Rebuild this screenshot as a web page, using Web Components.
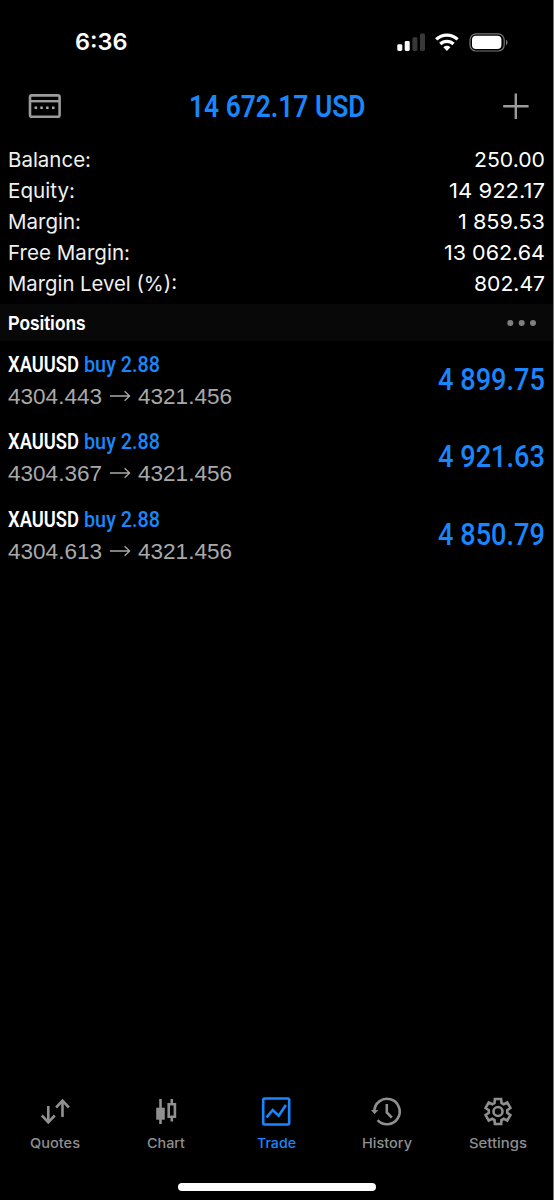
<!DOCTYPE html>
<html lang="en">
<head>
<meta charset="utf-8">
<title>Trade</title>
<style>
html,body{margin:0;background:#000;height:100%;overflow:hidden}
</style>
</head>
<body>
<trade-app></trade-app>
<script>
const define = (name, html, setup) => {
  const tpl = document.createElement('template');
  tpl.innerHTML = html;
  customElements.define(name, class extends HTMLElement {
    connectedCallback() {
      if (this.shadowRoot) return;
      this.attachShadow({ mode: 'open' }).append(tpl.content.cloneNode(true));
      if (setup) setup(this, this.shadowRoot);
    }
  });
};

// One line of text, condensed or widened to the width in its "w" attribute.
define('fit-text', `<style>
:host{display:block;flex:none;white-space:nowrap;height:var(--lh,30px)}
span{display:block;width:max-content;line-height:var(--lh,30px);transform-origin:0 50%;white-space:pre}
</style><span></span>`, (el, root) => {
  const s = root.querySelector('span');
  s.textContent = el.getAttribute('text');
  const w = +el.getAttribute('w');
  el.style.width = w + 'px';
  s.style.transform = 'scaleX(' + w / s.getBoundingClientRect().width + ')';
});

define('status-bar', `<style>
:host{display:flex;height:83px;box-sizing:border-box;padding:0 45px 0 74.5px;align-items:center;justify-content:space-between;color:#fff}
fit-text{font:600 23px Inter,sans-serif}
svg{display:block}
</style>
<fit-text text="6:36" w="52.5"></fit-text>
<svg width="112" height="22" viewBox="396 30 112 22">
<g fill="#fff"><rect x="397.3" y="43.2" width="5" height="6.8" rx="1.4"/><rect x="404.7" y="40" width="5" height="10" rx="1.4"/></g>
<g fill="#383838"><rect x="412.4" y="36.3" width="5" height="13.7" rx="1.4"/><rect x="420" y="32.6" width="5" height="17.4" rx="1.4"/></g>
<g fill="none" stroke="#fff" stroke-width="3.2"><path d="M436.2 38.4a15.3 15.3 0 0 1 21.4 0"/><path d="M440.3 43a9.4 9.4 0 0 1 13.2 0"/></g>
<path d="M443.4 46.3a5 5 0 0 1 7 0l-3.5 3.7z" fill="#fff"/>
<rect x="470" y="32.8" width="34.2" height="17.2" rx="6" fill="none" stroke="#777" stroke-width="1.2"/>
<rect x="472" y="34.8" width="29.4" height="13.2" rx="4" fill="#fff"/>
<path d="M506 38.8c2 .8 2 4.6 0 5.4z" fill="#777"/>
</svg>`);

define('account-header', `<style>
:host{display:flex;height:61px;box-sizing:border-box;padding:0 23px 15px 28px;align-items:center}
fit-text{font:600 30.5px Roboto,sans-serif;color:#1a86fb;margin:2px auto 0 127px}
svg{display:block}
</style>
<svg width="34" height="26" viewBox="28 93 34 26"><rect x="30" y="95.4" width="29.6" height="21.4" rx="1.8" fill="none" stroke="#9b9b9b" stroke-width="2.6"/><path d="M30 101.2h30" stroke="#9b9b9b" stroke-width="2.4"/><g fill="#aaa"><rect x="34.6" y="106.5" width="2.5" height="2.5"/><rect x="40.3" y="106.5" width="2.5" height="2.5"/><rect x="46.1" y="106.5" width="2.5" height="2.5"/><rect x="52" y="106.5" width="2.5" height="2.5"/></g></svg>
<fit-text text="14 672.17 USD" w="176.5"></fit-text>
<svg width="28" height="28" viewBox="0 0 28 28"><path d="M1.2 14.2h25.4M13.8 1.5v25.4" stroke="#9b9b9b" stroke-width="2.4"/></svg>`);

define('summary-row', `<style>
:host{display:flex;justify-content:space-between;height:31px;--lh:31px;padding:0 8px 0 8px;color:#f0f0f0}
.l{font:400 20.6px Inter,sans-serif}
.v{font:400 20.6px Inter,sans-serif;color:#fff}
</style>`, (el, root) => {
  const d = el.dataset;
  root.innerHTML += `<fit-text class="l" text="${d.label}" w="${d.lw}"></fit-text><fit-text class="v" text="${d.value}" w="${d.vw}"></fit-text>`;
});

define('section-bar', `<style>
:host{display:flex;height:37px;--lh:37px;background:#080808;align-items:center;justify-content:space-between;padding:0 16px 0 8px;color:#fff}
fit-text{font:700 20.5px "Liberation Sans",sans-serif}
svg{display:block}
</style><fit-text text="Positions" w="77.5"></fit-text>
<svg width="30" height="8" viewBox="0 0 30 8"><g fill="#808080"><circle cx="3.3" cy="4" r="3"/><circle cx="14.7" cy="4" r="3"/><circle cx="26" cy="4" r="3"/></g></svg>`);

define('position-row', `<style>
:host{display:flex;height:77.6px;box-sizing:border-box;padding:7.5px 8px 0 8px;justify-content:space-between}
.line{display:flex;align-items:center;height:32px;--lh:32px}
.s{font:600 22px Roboto,sans-serif;color:#fff}
.b{font:500 22px Roboto,sans-serif;color:#1a86fb;margin-left:5px}
.p{font:400 22px "Liberation Sans",sans-serif;color:#a9a9a9}
svg{display:block;margin:-2px 7px 0 8px}
.a{font:500 30.5px Roboto,sans-serif;color:#1a86fb;--lh:61px}
</style>`, (el, root) => {
  const d = el.dataset;
  root.innerHTML += `<div><div class="line"><fit-text class="s" text="XAUUSD" w="71"></fit-text><fit-text class="b" text="buy 2.88" w="76"></fit-text></div>
<div class="line"><fit-text class="p" text="${d.open}" w="94"></fit-text><svg width="21" height="14" viewBox="0 0 21 14" fill="none" stroke="#a9a9a9" stroke-width="1.3"><path d="M0 7h19.6M14.6 2.3l5 4.7-5 4.7"/></svg><fit-text class="p" text="4321.456" w="94"></fit-text></div></div>
<fit-text class="a" text="${d.amount}" w="107"></fit-text>`;
});

define('tab-item', `<style>
:host{display:flex;flex:1;flex-direction:column;align-items:center;color:#8f8f8f}
:host([active]){color:#1a86fb}
fit-text{font:500 13.5px Inter,sans-serif;--lh:20px;margin-top:5px}
::slotted(svg){display:block;width:32px;height:32px}
</style><slot></slot>`, (el, root) => {
  root.innerHTML += `<fit-text text="${el.dataset.label}" w="${el.dataset.w}"></fit-text>`;
});

define('tab-bar', `<style>
:host{display:flex;height:104px}
svg{fill:none;stroke:currentColor;stroke-width:2.6}
</style>
<tab-item data-label="Quotes" data-w="50"><svg viewBox="0 0 32 32"><path d="M9.3 10v16M2.9 19.5l6.4 6.8 6.4-6.8M23.5 21v-16M17.1 11.5l6.4-6.8 6.4 6.8"/></svg></tab-item>
<tab-item data-label="Chart" data-w="38"><svg viewBox="0 0 32 32"><path d="M10.5 3v25M21.8 3v5M21.8 21.5v4"/><path d="M6.2 11.7h8.6v12H6.2z" fill="currentColor" stroke="none"/><path d="M18.7 8.2h6.2v12.6h-6.2z"/></svg></tab-item>
<tab-item active data-label="Trade" data-w="39"><svg viewBox="0 0 32 32"><rect x="3.2" y="2.5" width="26" height="26" rx="1.5"/><path d="M6.5 21.3l6.2-7.2 6 5.7 7.2-10.8"/></svg></tab-item>
<tab-item data-label="History" data-w="50"><svg viewBox="0 0 32 32"><path d="M3.3 15.5a12.7 12.7 0 1 1 3.3 8.6"/><path d="M-.1 14h7.4l-3.7 4.2z" fill="currentColor" stroke="none"/><path d="M15.8 8v8.5l5 5.2"/></svg></tab-item>
<tab-item data-label="Settings" data-w="58"><svg viewBox="0 0 32 32"><path id="gear"/><circle cx="16" cy="15.5" r="4.5"/></svg></tab-item>`, (el, root) => {
  // Six-toothed gear outline, each tooth spanning 60 degrees.
  const pts = [];
  for (let i = 0; i < 6; i++) for (const [r, a] of [[9.3, -22], [12.9, -14], [12.9, 14], [9.3, 22]]) {
    const t = (i * 60 - 90 + a) * Math.PI / 180;
    pts.push((16 + r * Math.cos(t)).toFixed(2) + ' ' + (15.5 + r * Math.sin(t)).toFixed(2));
  }
  root.getElementById('gear').setAttribute('d', 'M' + pts.join('L') + 'Z');
});

define('trade-app', `<style>
:host{display:flex;flex-direction:column;width:554px;height:1200px;box-sizing:border-box;background:#000;border-right:1px solid #777;position:relative}
main{flex:1}
.gap{height:5px}
.home{position:absolute;left:178px;top:1183px;width:198px;height:8px;border-radius:4px;background:#fff}
</style>
<status-bar></status-bar><account-header></account-header>
<main>
<summary-row data-label="Balance:" data-lw="83" data-value="250.00" data-vw="71"></summary-row>
<summary-row data-label="Equity:" data-lw="67" data-value="14 922.17" data-vw="96"></summary-row>
<summary-row data-label="Margin:" data-lw="73" data-value="1 859.53" data-vw="87"></summary-row>
<summary-row data-label="Free Margin:" data-lw="122" data-value="13 062.64" data-vw="101"></summary-row>
<summary-row data-label="Margin Level (%):" data-lw="169" data-value="802.47" data-vw="71"></summary-row>
<div class="gap"></div>
<section-bar></section-bar>
<position-row data-open="4304.443" data-amount="4 899.75"></position-row>
<position-row data-open="4304.367" data-amount="4 921.63"></position-row>
<position-row data-open="4304.613" data-amount="4 850.79"></position-row>
</main>
<tab-bar></tab-bar>
<div class="home"></div>`);
</script>
</body>
</html>
